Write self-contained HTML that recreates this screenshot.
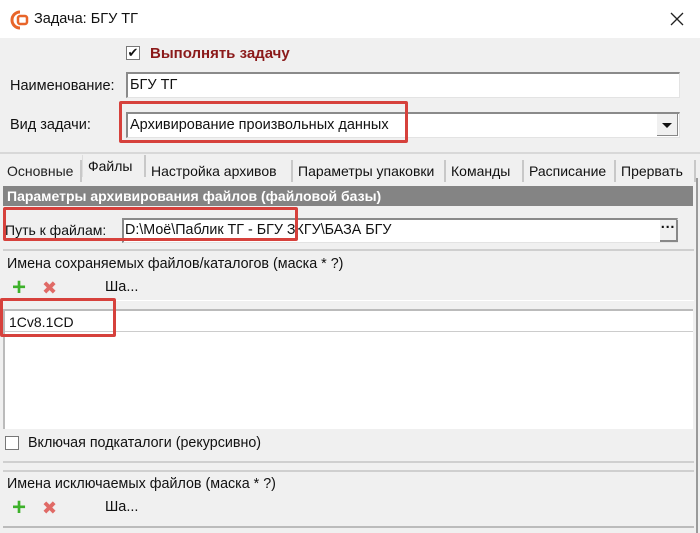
<!DOCTYPE html>
<html><head><meta charset="utf-8"><style>
*{margin:0;padding:0;box-sizing:border-box}
body{width:700px;height:533px;overflow:hidden;background:#f0f0f0;font-family:"Liberation Sans","DejaVu Sans",sans-serif;font-size:14.5px;color:#111;position:relative}
.a{position:absolute}
.in{background:#fff;border-top:2px solid #8a8a8a;border-left:2px solid #8a8a8a;border-bottom:1px solid #e3e3e3;border-right:1px solid #e3e3e3}
.red{border:3px solid #d6413c;border-radius:2px}
.t{white-space:nowrap}
.tab{position:absolute;top:160px;height:22px;border-right:2px solid #c8c8c8;padding-left:5px;line-height:22px;font-size:14px;white-space:nowrap}
.line{position:absolute;height:2px;background:#cfcfcf}
</style></head><body>
<div class="a" style="left:0;top:0;width:700px;height:38px;background:#fff"></div>
<svg class="a" style="left:10px;top:10px" width="20" height="20" viewBox="0 0 20 20"><path d="M10 2a8 8 0 1 0 0 16" fill="none" stroke="#e8652a" stroke-width="3"/><rect x="8" y="6" width="9" height="8" rx="2" fill="none" stroke="#e8652a" stroke-width="2.5"/></svg>
<div class="a t" style="left:34px;top:11px;font-size:14.5px">Задача: БГУ ТГ</div>
<svg class="a" style="left:670px;top:12px" width="14" height="14"><path d="M1 1L13 13M13 1L1 13" stroke="#222" stroke-width="1.3"/></svg>

<div class="a" style="left:126px;top:46px;width:14px;height:14px;background:#fff;border:1px solid #777;font-size:13px;line-height:12px;text-align:center">✔</div>
<div class="a t" style="left:150px;top:45px;font-weight:bold;color:#8b1a1a;font-size:15px">Выполнять задачу</div>

<div class="a t" style="left:10px;top:78px">Наименование:</div>
<div class="a in" style="left:126px;top:72px;width:554px;height:26px"></div>
<div class="a t" style="left:130px;top:77px">БГУ ТГ</div>

<div class="a t" style="left:10px;top:117px">Вид задачи:</div>
<div class="a in" style="left:126px;top:112px;width:554px;height:26px"></div>
<div class="a" style="left:657px;top:114px;width:21px;height:22px;background:#f0f0f0;border-right:1px solid #888;border-bottom:1px solid #888"></div>
<div class="a" style="left:662px;top:123px;width:0;height:0;border-left:5px solid transparent;border-right:5px solid transparent;border-top:5px solid #111"></div>
<div class="a t" style="left:130px;top:117px">Архивирование произвольных данных</div>
<div class="a red" style="left:119px;top:101px;width:289px;height:42px"></div>

<div class="line" style="left:0;top:152px;width:700px;background:#d8d8d8"></div>
<div class="tab" style="left:2px;width:80px;color:#222">Основные</div>
<div class="tab" style="left:82px;top:155px;width:64px;background:#f0f0f0;border-left:1px solid #ddd">Файлы</div>
<div class="tab" style="left:146px;width:147px">Настройка архивов</div>
<div class="tab" style="left:293px;width:153px">Параметры упаковки</div>
<div class="tab" style="left:446px;width:78px">Команды</div>
<div class="tab" style="left:524px;width:92px">Расписание</div>
<div class="tab" style="left:616px;width:80px">Прервать</div>
<div class="a" style="left:696px;top:178px;width:2px;height:355px;background:#9a9a9a"></div>

<div class="a t" style="left:3px;top:186px;width:690px;height:20px;background:#848484;color:#fff;font-weight:bold;padding-left:4px;line-height:20px;font-size:14px">Параметры архивирования файлов (файловой базы)</div>

<div class="a t" style="left:5px;top:222px;font-size:14px">Путь к файлам:</div>
<div class="a in" style="left:122px;top:218px;width:556px;height:25px"></div>
<div class="a t" style="left:125px;top:222px;font-size:14.3px">D:\Моё\Паблик ТГ - БГУ ЗКГУ\БАЗА БГУ</div>
<div class="a" style="left:660px;top:220px;width:18px;height:22px;background:#f0f0f0;border-right:2px solid #888;border-bottom:2px solid #888;text-align:center;font-weight:bold;line-height:16px">···</div>
<div class="a red" style="left:3px;top:207px;width:295px;height:34px"></div>

<div class="line" style="left:3px;top:249px;width:691px"></div>
<div class="a t" style="left:7px;top:256px;font-size:14.3px">Имена сохраняемых файлов/каталогов (маска * ?)</div>
<div class="a" style="left:12px;top:280px;color:#3db12a;font-size:24px;font-weight:bold;line-height:16px">+</div>
<div class="a" style="left:42px;top:280px;color:#e06a66;font-size:18px;font-weight:bold;line-height:16px">✖</div>
<div class="a t" style="left:105px;top:279px">Ша...</div>
<div class="line" style="left:3px;top:300px;width:691px;height:1px;background:#fff"></div>

<div class="a" style="left:3px;top:309px;width:690px;height:120px;background:#fff;border-top:2px solid #bbb;border-left:2px solid #bbb"></div>
<div class="a" style="left:5px;top:331px;width:688px;height:1px;background:#ccc"></div>
<div class="a t" style="left:9px;top:314px;font-size:14px">1Cv8.1CD</div>
<div class="a red" style="left:0;top:298px;width:116px;height:39px"></div>

<div class="a" style="left:5px;top:436px;width:14px;height:14px;background:#fff;border:1px solid #777"></div>
<div class="a t" style="left:28px;top:435px;font-size:14.3px">Включая подкаталоги (рекурсивно)</div>
<div class="line" style="left:3px;top:461px;width:691px"></div>
<div class="line" style="left:3px;top:470px;width:691px"></div>
<div class="a t" style="left:7px;top:476px;font-size:14.3px">Имена исключаемых файлов (маска * ?)</div>
<div class="a" style="left:12px;top:500px;color:#3db12a;font-size:24px;font-weight:bold;line-height:16px">+</div>
<div class="a" style="left:42px;top:500px;color:#e06a66;font-size:18px;font-weight:bold;line-height:16px">✖</div>
<div class="a t" style="left:105px;top:499px">Ша...</div>
<div class="line" style="left:3px;top:526px;width:691px;background:#bbb"></div>
</body></html>
